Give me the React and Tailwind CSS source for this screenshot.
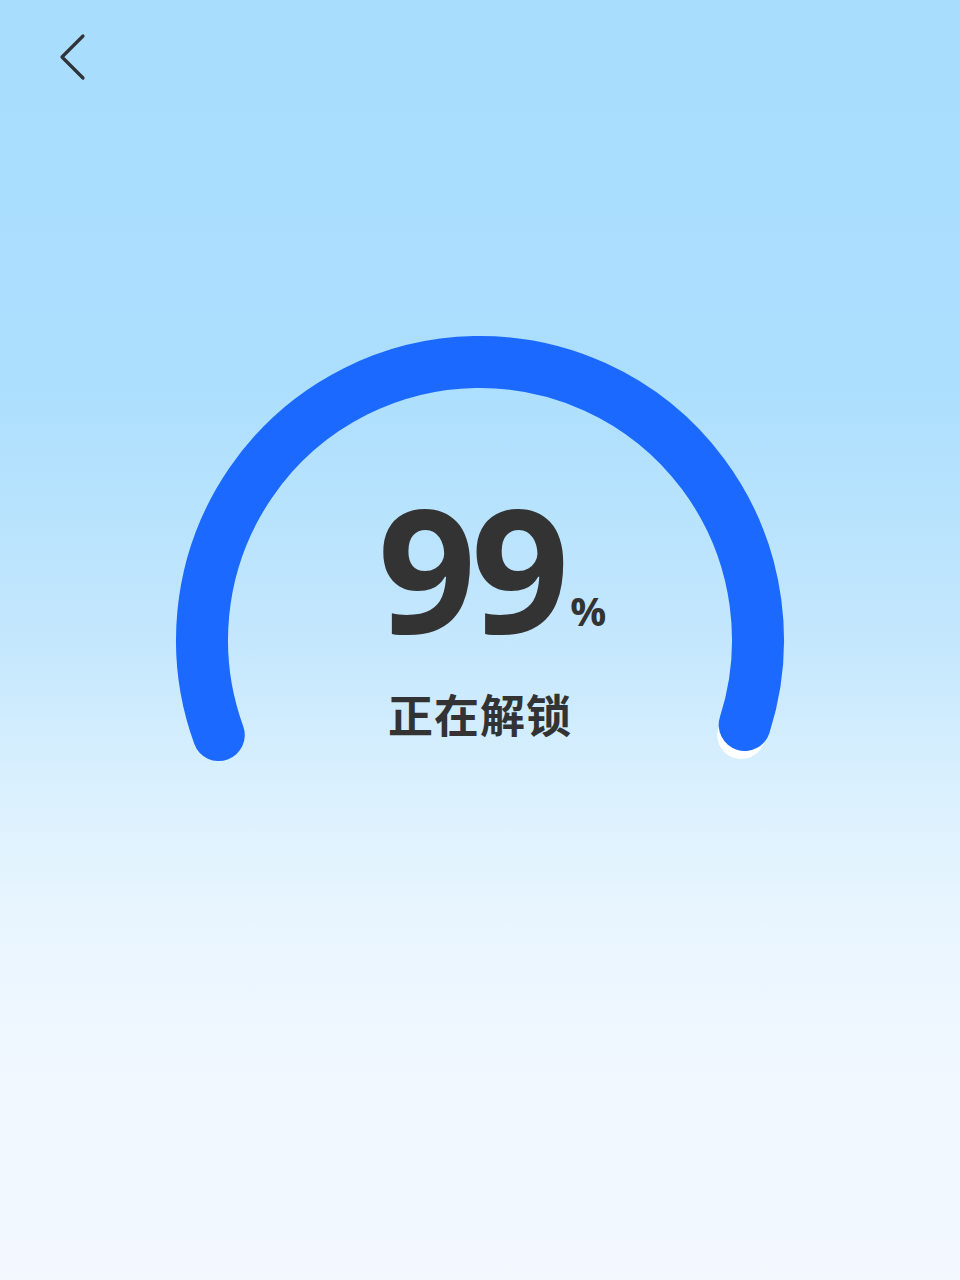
import React from 'react';

const progress = 99;

function Gauge({ value }) {
  // arc from 160deg to 380deg (clockwise on screen), 220deg span
  const cx = 310, cy = 310, r = 278;
  const start = 160, span = 220;
  const pt = (deg) => {
    const a = (deg * Math.PI) / 180;
    return [cx + r * Math.cos(a), cy + r * Math.sin(a)];
  };
  const [sx, sy] = pt(start);
  const [ex, ey] = pt(start + (span * value) / 100);
  const [kx, ky] = pt(start + span);

  return (
    <svg width="620" height="440" viewBox="0 0 620 440" className="absolute inset-0">
      <circle cx={kx} cy={ky} r="24" fill="#ffffff" />
      <path
        d={`M ${sx} ${sy} A ${r} ${r} 0 1 1 ${ex} ${ey}`}
        fill="none"
        stroke="#1b69fe"
        strokeWidth="52"
        strokeLinecap="round"
      />
    </svg>
  );
}

export default function App() {
  return (
    <div
      className="w-[960px] h-[1280px] flex flex-col bg-[linear-gradient(180deg,#a8ddfe_0%,#acdffe_30%,#c4e7fd_50%,#dbf1fe_62%,#ebf6ff_74%,#f1f8ff_85%,#f3f8ff_100%)]"
      style={{ fontFamily: '"Open Sans", "Noto Sans CJK SC", sans-serif' }}
    >
      {/* header */}
      <div className="h-[110px] pl-[56px] pt-[32px]">
        <svg width="32" height="50" viewBox="0 0 32 50" fill="none">
          <path d="M27 4 L6 25 L27 46" stroke="#2f3438" strokeWidth="3.2" strokeLinecap="round" strokeLinejoin="round" />
        </svg>
      </div>

      {/* gauge */}
      <div className="relative w-[620px] h-[440px] mx-auto mt-[220px]">
        <Gauge value={progress} />
        <div className="relative flex flex-col items-center pt-[167px]">
          <div className="flex items-end h-[140px] text-[#333333] pl-[24px]">
            <span className="text-[172px] font-bold leading-[140px] tracking-[-5px]">{progress}</span>
            <span className="text-[40px] font-bold leading-none mb-[6px] ml-[6px]">%</span>
          </div>
          <div className="mt-[56px] text-[45px] font-semibold text-[#333333] leading-none tracking-[1px]">正在解锁</div>
        </div>
      </div>
    </div>
  );
}
